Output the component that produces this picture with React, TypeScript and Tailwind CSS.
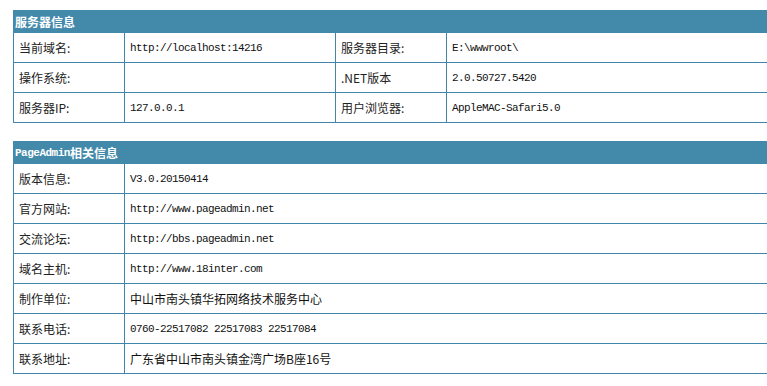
import React from "react";

const MONO = "font-['Liberation_Mono',monospace] text-[11px] tracking-[-0.6px]";
const CJK = "font-['Noto_Sans_CJK_SC','Noto_Sans',sans-serif] text-[12px]";

type Cell = { text: string; mono?: boolean };

function Label({ text, last }: { text: string; last?: boolean }) {
  return (
    <div
      className={`flex items-center pl-[5px] border-r border-[#3f86aa] text-[#222] ${CJK} leading-[14px]`}
    >
      {text}
    </div>
  );
}

function Value({ cell, last }: { cell: Cell; last?: boolean }) {
  return (
    <div
      className={`flex items-center pl-[5px] ${last ? "" : "border-r border-[#3f86aa]"} text-[#111] ${
        cell.mono ? MONO : CJK
      } leading-[14px] whitespace-nowrap`}
    >
      {cell.text}
    </div>
  );
}

function Header({ children }: { children: React.ReactNode }) {
  return (
    <div className="h-[23px] bg-[#4289aa] flex items-center pl-[2px] text-white font-bold text-[12px] leading-[14px] font-['Noto_Sans_CJK_SC',sans-serif]">
      {children}
    </div>
  );
}

function Row4({ a, b, c, d }: { a: string; b: Cell; c: string; d: Cell }) {
  return (
    <div className="grid grid-cols-[111px_211px_111px_1fr] h-[30px] border-l border-b border-[#3f86aa]">
      <Label text={a} />
      <Value cell={b} />
      <Label text={c} />
      <Value cell={d} last />
    </div>
  );
}

function Row2({ a, b }: { a: string; b: Cell }) {
  return (
    <div className="grid grid-cols-[111px_1fr] h-[30px] border-l border-b border-[#3f86aa]">
      <Label text={a} />
      <Value cell={b} last />
    </div>
  );
}

export default function App() {
  return (
    <div className="w-[767px] h-[386px] overflow-hidden bg-white">
      <div className="ml-[13px] w-[770px] pt-[10px]">
        <Header>服务器信息</Header>
        <Row4 a="当前域名:" b={{ text: "http://localhost:14216", mono: true }} c="服务器目录:" d={{ text: "E:\\wwwroot\\", mono: true }} />
        <Row4 a="操作系统:" b={{ text: "", mono: true }} c=".NET版本" d={{ text: "2.0.50727.5420", mono: true }} />
        <Row4 a="服务器IP:" b={{ text: "127.0.0.1", mono: true }} c="用户浏览器:" d={{ text: "AppleMAC-Safari5.0", mono: true }} />

        <div className="mt-[18px]">
          <Header>
            <span className="font-['Liberation_Mono',monospace] text-[11px] tracking-[-0.5px]">PageAdmin</span>
            <span>相关信息</span>
          </Header>
          <Row2 a="版本信息:" b={{ text: "V3.0.20150414", mono: true }} />
          <Row2 a="官方网站:" b={{ text: "http://www.pageadmin.net", mono: true }} />
          <Row2 a="交流论坛:" b={{ text: "http://bbs.pageadmin.net", mono: true }} />
          <Row2 a="域名主机:" b={{ text: "http://www.18inter.com", mono: true }} />
          <Row2 a="制作单位:" b={{ text: "中山市南头镇华拓网络技术服务中心" }} />
          <Row2 a="联系电话:" b={{ text: "0760-22517082 22517083 22517084", mono: true }} />
          <Row2 a="联系地址:" b={{ text: "广东省中山市南头镇金湾广场B座16号" }} />
        </div>
      </div>
    </div>
  );
}
